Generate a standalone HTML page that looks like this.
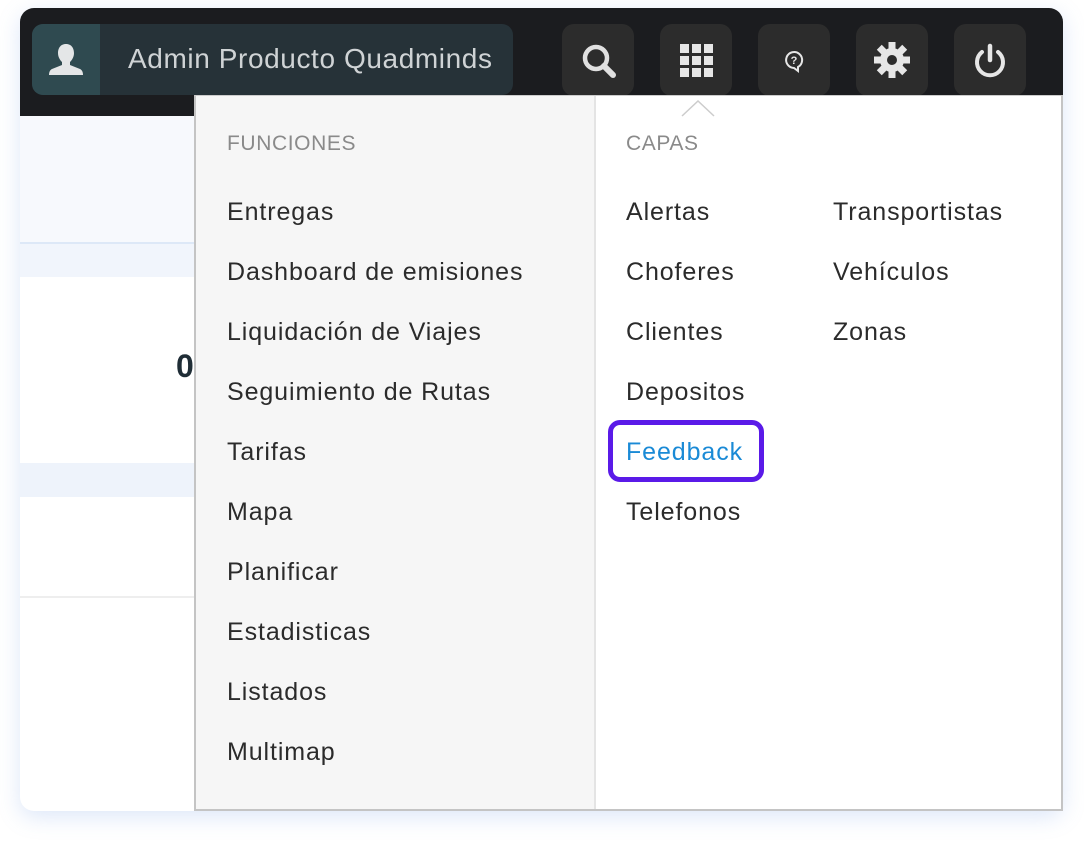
<!DOCTYPE html>
<html><head><meta charset="utf-8"><style>
*{margin:0;padding:0;box-sizing:border-box}
body{width:1084px;height:844px;background:#fff;font-family:"Liberation Sans",sans-serif;position:relative;overflow:hidden}
.card{position:absolute;left:20px;top:8px;width:1043px;height:803px;border-radius:14px;background:#fff;overflow:hidden;box-shadow:0 6px 22px rgba(120,160,230,.25)}
.hdr{position:absolute;left:0;top:0;width:1043px;height:108px;background:#1b1c1f}
.pill{position:absolute;left:12px;top:16px;width:481px;height:71px;border-radius:11px;background:#263238;overflow:hidden}
.pill .ic{position:absolute;left:0;top:0;width:68px;height:71px;background:#2f4a50}
.pill span{position:absolute;left:96px;top:19px;font-size:28px;letter-spacing:.6px;color:#cfd3d5;white-space:nowrap;width:364px;overflow:hidden}
.btn{position:absolute;top:16px;width:72px;height:72px;border-radius:12px;background:#2c2c2c}
.btn svg{position:absolute;left:0;top:0}
.dd{position:absolute;left:194px;top:95px;width:869px;height:716px;border:2px solid #c4c4c4;border-top:1px solid #ccc;background:#fff}
.lc{position:absolute;left:0;top:0;width:400px;height:100%;background:#f6f6f6;border-right:2px solid #e4e4e4}
.t{position:absolute;font-size:25px;letter-spacing:.9px;color:#2b2b2b;white-space:nowrap;line-height:30px}
.h{position:absolute;font-size:21px;letter-spacing:.6px;color:#8a8a8a;line-height:30px}
</style></head><body>
<div class="card">
 <div style="position:absolute;left:0;top:108px;width:200px;height:127px;background:#f7f9fd"></div>
 <div style="position:absolute;left:0;top:234px;width:200px;height:2px;background:#dde8f7"></div>
 <div style="position:absolute;left:0;top:236px;width:200px;height:33px;background:#f1f5fc"></div>
 <div style="position:absolute;left:0;top:455px;width:200px;height:34px;background:#eef3fb"></div>
 <div style="position:absolute;left:0;top:588px;width:200px;height:2px;background:#eee"></div>
 <div style="position:absolute;left:156px;top:340px;font-size:32px;font-weight:bold;color:#1f2d36">0</div>
 <div class="hdr">
  <div class="pill"><div class="ic"><svg width="68" height="71" viewBox="0 0 68 71"><path d="M34 20c-6 0-8 5-8 9 0 4 2 7 4 9v3l-10 4c-2 1-3 3-3 6h34c0-3-1-5-3-6l-10-4v-3c2-2 4-5 4-9 0-4-2-9-8-9z" fill="#e4e6e7"/></svg></div><span>Admin Producto Quadminds</span></div>
  <div class="btn" style="left:542px"><svg width="72" height="72"><circle cx="34" cy="34" r="11" fill="none" stroke="#e0e0e0" stroke-width="4.5"/><path d="M42 42l9 9" stroke="#e0e0e0" stroke-width="6" stroke-linecap="round"/></svg></div>
  <div class="btn" style="left:640px"><svg width="72" height="72" fill="#e6e6e6"><rect x="20" y="20" width="9" height="9"/><rect x="32" y="20" width="9" height="9"/><rect x="44" y="20" width="9" height="9"/><rect x="20" y="32" width="9" height="9"/><rect x="32" y="32" width="9" height="9"/><rect x="44" y="32" width="9" height="9"/><rect x="20" y="44" width="9" height="9"/><rect x="32" y="44" width="9" height="9"/><rect x="44" y="44" width="9" height="9"/></svg></div>
  <div class="btn" style="left:738px"><svg width="72" height="72"><path d="M36 44a8 8 0 1 1 4-1l0 4z" fill="none" stroke="#e6e6e6" stroke-width="2"/><text x="36" y="40" font-size="11" font-weight="bold" fill="#e6e6e6" text-anchor="middle" font-family="Liberation Sans">?</text></svg></div>
  <div class="btn" style="left:836px"><svg width="72" height="72" viewBox="0 0 72 72"><g fill="#e6e6e6" transform="translate(36 36)"><circle r="12"/><g id="tt"><rect x="-3.5" y="-18" width="7" height="8"/></g><use href="#tt" transform="rotate(45)"/><use href="#tt" transform="rotate(90)"/><use href="#tt" transform="rotate(135)"/><use href="#tt" transform="rotate(180)"/><use href="#tt" transform="rotate(225)"/><use href="#tt" transform="rotate(270)"/><use href="#tt" transform="rotate(315)"/></g><circle cx="36" cy="36" r="5" fill="#2c2c2c"/></svg></div>
  <div class="btn" style="left:934px"><svg width="72" height="72"><path d="M28 28a13 13 0 1 0 16 0" fill="none" stroke="#e6e6e6" stroke-width="4" stroke-linecap="round"/><path d="M36 22v14" stroke="#e6e6e6" stroke-width="4.5" stroke-linecap="round"/></svg></div>
 </div>
</div>
<div class="dd">
 <div class="lc"></div>
 <svg style="position:absolute;left:485px;top:3px" width="34" height="18"><path d="M1 17L17 2L33 17" fill="none" stroke="#ccc" stroke-width="1.5"/></svg>
 <div class="h" style="left:31px;top:33px">FUNCIONES</div>
 <div class="t" style="left:31px;top:101px">Entregas</div>
 <div class="t" style="left:31px;top:161px">Dashboard de emisiones</div>
 <div class="t" style="left:31px;top:221px">Liquidación de Viajes</div>
 <div class="t" style="left:31px;top:281px">Seguimiento de Rutas</div>
 <div class="t" style="left:31px;top:341px">Tarifas</div>
 <div class="t" style="left:31px;top:401px">Mapa</div>
 <div class="t" style="left:31px;top:461px">Planificar</div>
 <div class="t" style="left:31px;top:521px">Estadisticas</div>
 <div class="t" style="left:31px;top:581px">Listados</div>
 <div class="t" style="left:31px;top:641px">Multimap</div>
 <div class="h" style="left:430px;top:33px">CAPAS</div>
 <div class="t" style="left:430px;top:101px">Alertas</div>
 <div class="t" style="left:430px;top:161px">Choferes</div>
 <div class="t" style="left:430px;top:221px">Clientes</div>
 <div class="t" style="left:430px;top:281px">Depositos</div>
 <div style="position:absolute;left:412px;top:324px;width:156px;height:62px;border:5px solid #5a1ae8;border-radius:12px"></div>
 <div class="t" style="left:430px;top:341px;color:#1a8ad6">Feedback</div>
 <div class="t" style="left:430px;top:401px">Telefonos</div>
 <div class="t" style="left:637px;top:101px">Transportistas</div>
 <div class="t" style="left:637px;top:161px">Vehículos</div>
 <div class="t" style="left:637px;top:221px">Zonas</div>
</div>
</body></html>
